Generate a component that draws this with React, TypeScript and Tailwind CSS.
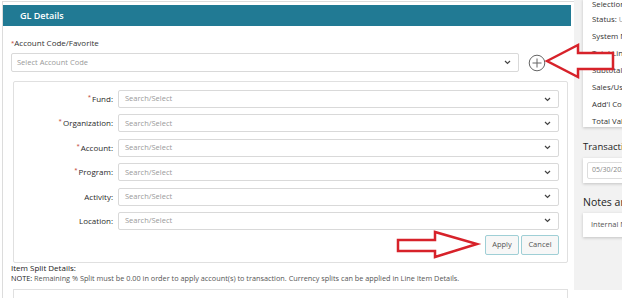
import React from "react";

const font = { fontFamily: '"Open Sans", "Noto Sans", Arial, sans-serif' };

function Chevron() {
  return (
    <svg width="7" height="5" viewBox="0 0 7 5" className="shrink-0">
      <path d="M1 1 L3.5 3.5 L6 1" fill="none" stroke="#444" strokeWidth="1.2" />
    </svg>
  );
}

function SelectBox({ placeholder }: { placeholder: string }) {
  return (
    <div className="flex-1 h-[18px] border border-[#d9d9d9] rounded-[2px] bg-white flex items-center justify-between pl-[6px] pr-[7px]">
      <span className="text-[7.5px] text-[#9a9a9a]">{placeholder}</span>
      <Chevron />
    </div>
  );
}

function Row({ label, required }: { label: string; required?: boolean }) {
  return (
    <div className="flex items-center h-[18px]">
      <div className="w-[104px] text-right pr-[5px] text-[8px] text-[#2a2a2a] font-medium">
        {required && <span className="text-[#c0392b] text-[6px] align-top mr-[1px]">*</span>}
        {label}
      </div>
      <SelectBox placeholder="Search/Select" />
    </div>
  );
}

export default function App() {
  const rows: [string, boolean][] = [
    ["Fund:", true],
    ["Organization:", true],
    ["Account:", true],
    ["Program:", true],
    ["Activity:", false],
    ["Location:", false],
  ];
  const summary = ["System Number:", "Total Lines:", "Subtotal:", "Sales/Use Tax:", "Add'l Cost:", "Total Value:"];
  return (
    <div className="relative w-[622px] h-[298px] overflow-hidden bg-white flex" style={font}>
      {/* main column */}
      <div className="w-[574px] shrink-0 pl-[2px] pt-[1px]">
        <div className="border-l border-t border-[#dcdcdc] h-full pt-[3px] pr-[3px]">
          <div className="h-[21px] bg-[#217a94] flex items-center pl-[17px]">
            <span className="text-white text-[9px] font-semibold">GL Details</span>
          </div>
          <div className="pl-[8px] pr-[5px]">
            <div className="mt-[12px] text-[8px] text-[#333] leading-[10px]">
              <span className="text-[#c0392b] text-[6px] align-top">*</span>Account Code/Favorite
            </div>
            <div className="mt-[5px] flex items-center">
              <div className="w-[508px] h-[19px] border border-[#d9d9d9] rounded-[2px] flex items-center justify-between pl-[5px] pr-[7px]">
                <span className="text-[7.5px] text-[#9a9a9a]">Select Account Code</span>
                <Chevron />
              </div>
              <svg width="18" height="18" viewBox="0 0 18 18" className="ml-[9px]">
                <circle cx="9" cy="9" r="7.8" fill="none" stroke="#666" strokeWidth="1" />
                <path d="M9 4.5 V13.5 M4.5 9 H13.5" stroke="#666" strokeWidth="1" />
              </svg>
            </div>
            <div className="mt-[9px] ml-[2px] w-[555px] h-[182px] border border-[#e0e0e0] rounded-[2px] pt-[8px] pr-[8px]">
              <div className="flex flex-col gap-[6.4px]">
                {rows.map(([l, r]) => (
                  <Row key={l} label={l} required={r} />
                ))}
              </div>
              <div className="flex justify-end gap-[2px] mt-[5px]">
                <button className="h-[20px] w-[34px] border border-[#9fcfd6] rounded-[2px] bg-[#f7f7f7] text-[7.5px] text-[#555]">
                  Apply
                </button>
                <button className="h-[20px] w-[38px] border border-[#9fcfd6] rounded-[2px] bg-[#f7f7f7] text-[7.5px] text-[#555]">
                  Cancel
                </button>
              </div>
            </div>
            <div className="-mt-[1px] text-[8px] text-[#222] leading-[11px]">Item Split Details:</div>
            <div className="text-[7.3px] text-[#555] leading-[11px] whitespace-nowrap">
              <span className="text-[#222]">NOTE:</span> Remaining % Split must be 0.00 in order to apply account(s) to
              transaction. Currency splits can be applied in Line Item Details.
            </div>
            <div className="mt-[5px] ml-[2px] w-[555px] h-[20px] border-t border-l border-r border-[#e0e0e0]" />
          </div>
        </div>
      </div>
      {/* right panel */}
      <div className="flex-1 bg-[#f2f2f2] h-[290px] pl-[9px] overflow-hidden">
        <div className="bg-white w-[120px] h-[128px] shadow-[0_1px_3px_rgba(0,0,0,0.2)] pl-[9px] text-[7.8px] text-[#333] whitespace-nowrap">
          <div className="h-[11.5px] leading-[11.5px] -mt-[1px]">Selection Name:</div>
          <div className="h-[17px] leading-[17px]">
            Status: <span className="text-[#999]">Unassigned</span>
          </div>
          {summary.map((s) => (
            <div key={s} className="h-[17px] leading-[17px]">
              {s}
            </div>
          ))}
        </div>
        <div className="mt-[13px] text-[9.5px] text-[#222] leading-[13px] whitespace-nowrap">Transaction Date</div>
        <div className="mt-[5px] bg-white w-[120px] h-[25px] shadow-[0_1px_3px_rgba(0,0,0,0.2)] pl-[4px] flex items-center">
          <div className="w-[100px] h-[17px] border border-[#ddd] rounded-[2px] pl-[4px] flex items-center text-[7px] text-[#888]">
            05/30/2023
          </div>
        </div>
        <div className="mt-[12px] text-[10.5px] text-[#222] leading-[14px] whitespace-nowrap">Notes and Attachments</div>
        <div className="mt-[4px] bg-white w-[120px] h-[24px] shadow-[0_1px_3px_rgba(0,0,0,0.2)] pl-[8px] flex items-center text-[7.5px] text-[#555] whitespace-nowrap">
          Internal Notes
        </div>
      </div>
      {/* annotation arrows */}
      <svg className="absolute left-0 top-0 pointer-events-none" width="622" height="298">
        <polygon
          points="547,61 578,45 578,53 613,53 613,69 578,69 578,77"
          fill="white"
          stroke="#d7222a"
          strokeWidth="2.5"
          strokeLinejoin="miter"
        />
        <polygon
          points="398,240 435,240 435,232 477,244 435,257 435,251 398,251"
          fill="white"
          stroke="#d7222a"
          strokeWidth="2.5"
        />
      </svg>
    </div>
  );
}
